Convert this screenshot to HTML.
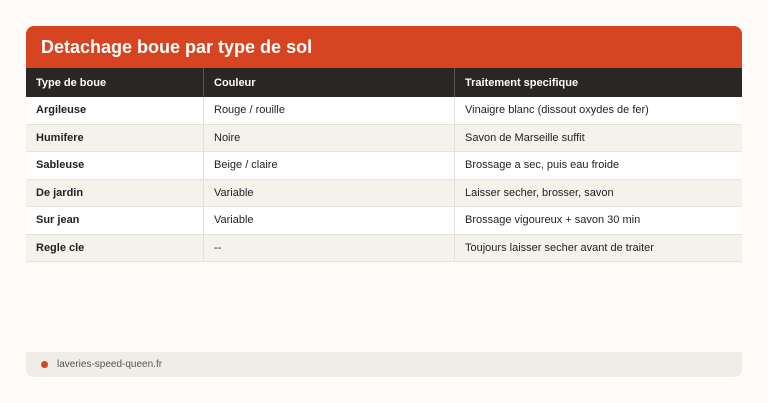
<!DOCTYPE html>
<html><head><style>
body{margin:0;background:#fdfaf7;font-family:"Liberation Sans",sans-serif;width:768px;height:403px;position:relative;overflow:hidden}
.card{position:absolute;left:26px;top:26px;width:716px}
.hd{background:#d74421;color:#fff;height:42px;border-radius:8px 8px 0 0;font-weight:bold;font-size:18px;line-height:43px;padding-left:15px;box-sizing:border-box}
.r{display:flex;height:27.5px;box-sizing:border-box;border-bottom:1px solid #e6e3dd;font-size:11px;color:#222;align-items:center}
.r div{height:100%;display:flex;align-items:center;padding:0 10px;box-sizing:border-box;border-right:1px solid #e3e0da}
.r div:nth-child(1){width:178px;font-weight:bold}
.r div:nth-child(2){width:251px}
.r div:nth-child(3){width:287px;border-right:none}
.h{background:#2a2624;color:#fff;height:29px;border-bottom:none}
.h div{font-weight:bold;border-right-color:#555}
.o{background:#f5f2ec}.e{background:#fff}
.ft{position:absolute;left:26px;top:352px;width:716px;height:25px;background:#f0ede7;border-radius:0 0 8px 8px;font-size:10px;color:#555;line-height:25px;box-sizing:border-box;padding-left:31px}
.ft:before{content:"";position:absolute;left:15px;top:9px;width:7px;height:7px;border-radius:50%;background:#d74421}
</style></head><body>
<div class="card">
<div class="hd">Detachage boue par type de sol</div>
<div class="r h"><div>Type de boue</div><div>Couleur</div><div>Traitement specifique</div></div>
<div class="r e"><div>Argileuse</div><div>Rouge / rouille</div><div>Vinaigre blanc (dissout oxydes de fer)</div></div>
<div class="r o"><div>Humifere</div><div>Noire</div><div>Savon de Marseille suffit</div></div>
<div class="r e"><div>Sableuse</div><div>Beige / claire</div><div>Brossage a sec, puis eau froide</div></div>
<div class="r o"><div>De jardin</div><div>Variable</div><div>Laisser secher, brosser, savon</div></div>
<div class="r e"><div>Sur jean</div><div>Variable</div><div>Brossage vigoureux + savon 30 min</div></div>
<div class="r o"><div>Regle cle</div><div>--</div><div>Toujours laisser secher avant de traiter</div></div>
</div>
<div class="ft">laveries-speed-queen.fr</div>
</body></html>
